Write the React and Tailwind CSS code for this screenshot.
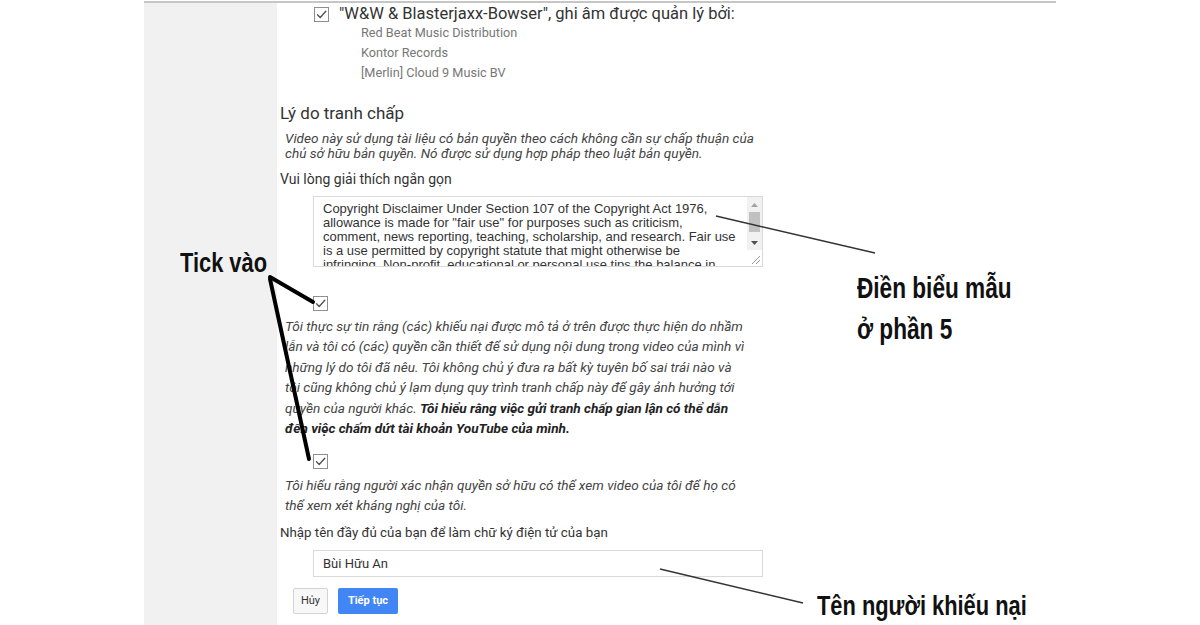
import React from "react";

// Checked box as shown in the old YouTube dispute form
function Tick() {
  return (
    <span className="flex h-[15px] w-[15px] shrink-0 items-center justify-center border border-[#8f8f8f] bg-white">
      <svg width="13" height="13" viewBox="0 0 13 13" fill="none">
        <path d="M2.5 6.8 L5.2 9.5 L10.8 3.2" stroke="#555" strokeWidth="1.4" strokeLinecap="round" strokeLinejoin="round" />
      </svg>
    </span>
  );
}

const disclaimer = [
  "Copyright Disclaimer Under Section 107 of the Copyright Act 1976,",
  'allowance is made for "fair use" for purposes such as criticism,',
  "comment, news reporting, teaching, scholarship, and research. Fair use",
  "is a use permitted by copyright statute that might otherwise be",
  "infringing. Non-profit, educational or personal use tips the balance in",
  "favor of fair use.",
];

// textarea look-alike with the classic scrollbar and resize grip
function Explain() {
  return (
    <div className="ml-[33px] mt-[8px] flex h-[71px] w-[450px] border border-[#d9d9d9] bg-white">
      <div className="flex-1 overflow-hidden whitespace-nowrap pl-[9px] pr-[4px] pt-[5px] font-['Liberation_Sans',Arial,sans-serif] text-[13px] leading-[14px] text-[#333]">
        {disclaimer.map((line) => (
          <div key={line}>{line}</div>
        ))}
      </div>
      <div className="flex w-[15px] flex-col bg-[#f1f1f1]">
        <div className="flex h-[15px] items-center justify-center">
          <svg width="7" height="4" viewBox="0 0 7 4"><path d="M0 4 L3.5 0 L7 4 Z" fill="#a3a3a3" /></svg>
        </div>
        <div className="mx-[2px] h-[20px] bg-[#c1c1c1]"></div>
        <div className="flex-1"></div>
        <div className="flex h-[15px] items-center justify-center">
          <svg width="7" height="4" viewBox="0 0 7 4"><path d="M0 0 L7 0 L3.5 4 Z" fill="#505050" /></svg>
        </div>
        <div className="flex h-[16px] items-end justify-end bg-white pb-[2px] pr-[2px]">
          <svg width="9" height="9" viewBox="0 0 9 9">
            <path d="M1 9 L9 1 M5 9 L9 5" stroke="#999" strokeWidth="1" />
          </svg>
        </div>
      </div>
    </div>
  );
}

const note = "absolute origin-left scale-x-[0.78] font-['Liberation_Sans',Arial,sans-serif] font-bold text-[#111]";

export default function App() {
  return (
    <div className="relative h-[625px] overflow-hidden bg-white font-['Roboto',sans-serif] text-[#333]">
      <div className="ml-[144px] mt-[1px] flex w-[912px] border-t-2 border-[#c6c6c6]">
        {/* side panel */}
        <div className="h-[640px] w-[133px] bg-[#f1f1f1]"></div>

        {/* form */}
        <div className="flex-1 pl-[3px]">
          <div className="ml-[34px] mt-[2px] flex h-[18px] items-center gap-[10px] text-[16.5px]">
            <Tick />
            <span>"W&amp;W &amp; Blasterjaxx-Bowser", ghi âm được quản lý bởi:</span>
          </div>
          <div className="ml-[81px] text-[12.7px] leading-[20px] text-[#777]">
            <p>Red Beat Music Distribution</p>
            <p>Kontor Records</p>
            <p>[Merlin] Cloud 9 Music BV</p>
          </div>

          <h2 className="mt-[20px] text-[17px] leading-[20px]">Lý do tranh chấp</h2>
          <p className="ml-[5px] mt-[8px] whitespace-nowrap text-[13.6px] italic leading-[15px] text-[#444]">
            Video này sử dụng tài liệu có bản quyền theo cách không cần sự chấp thuận của
            <br />
            chủ sở hữu bản quyền. Nó được sử dụng hợp pháp theo luật bản quyền.
          </p>

          <p className="mt-[9px] text-[14px] leading-[18px]">Vui lòng giải thích ngắn gọn</p>
          <Explain />

          <div className="ml-[33px] mt-[29px]">
            <Tick />
          </div>
          <p className="ml-[5px] mt-[5px] whitespace-nowrap text-[13.6px] italic leading-[20.4px] text-[#444]">
            Tôi thực sự tin rằng (các) khiếu nại được mô tả ở trên được thực hiện do nhầm
            <br />
            lẫn và tôi có (các) quyền cần thiết để sử dụng nội dung trong video của mình vì
            <br />
            những lý do tôi đã nêu. Tôi không chủ ý đưa ra bất kỳ tuyên bố sai trái nào và
            <br />
            tôi cũng không chủ ý lạm dụng quy trình tranh chấp này để gây ảnh hưởng tới
            <br />
            quyền của người khác.{" "}
            <b className="font-bold text-[#222]">
              Tôi hiểu rằng việc gửi tranh chấp gian lận có thể dẫn
              <br />
              đến việc chấm dứt tài khoản YouTube của mình.
            </b>
          </p>

          <div className="ml-[33px] mt-[16px]">
            <Tick />
          </div>
          <p className="ml-[5px] mt-[6px] whitespace-nowrap text-[13.6px] italic leading-[20px] text-[#444]">
            Tôi hiểu rằng người xác nhận quyền sở hữu có thể xem video của tôi để họ có
            <br />
            thể xem xét kháng nghị của tôi.
          </p>

          <p className="mt-[9px] text-[13.3px] leading-[18px]">Nhập tên đầy đủ của bạn để làm chữ ký điện tử của bạn</p>
          <div className="ml-[33px] mt-[8px] flex h-[27px] w-[450px] items-center border border-[#d9d9d9] pl-[9px] text-[13px]">
            Bùi Hữu An
          </div>

          <div className="ml-[13px] mt-[11px] flex gap-[10px] text-[11px]">
            <button className="h-[26px] w-[35px] rounded-[2px] border border-[#d3d3d3] bg-[#f8f8f8] text-[#333]">Hủy</button>
            <button className="h-[26px] w-[60px] rounded-[2px] bg-[#4285f4] font-bold text-white">Tiếp tục</button>
          </div>
        </div>
      </div>

      {/* annotation strokes drawn over the screenshot */}
      <svg className="pointer-events-none absolute inset-0" width="1200" height="625" viewBox="0 0 1200 625">
        <path d="M270 277 L313 302" stroke="#000" strokeWidth="4" strokeLinecap="round" />
        <path d="M270 279 L309 459" stroke="#000" strokeWidth="4" strokeLinecap="round" />
        <path d="M716 216 L875 253" stroke="#333" strokeWidth="1.4" />
        <path d="M660 569 L803 603" stroke="#333" strokeWidth="1.4" />
      </svg>

      <div className={`${note} left-[180px] top-[245px] text-[28px] leading-[36px]`}>Tick vào</div>
      <div className={`${note} left-[857px] top-[268px] text-[29px] leading-[41px]`}>
        Điền biểu mẫu
        <br />
        ở phần 5
      </div>
      <div className={`${note} left-[817px] top-[588px] text-[28px] leading-[36px]`}>Tên người khiếu nại</div>
    </div>
  );
}
